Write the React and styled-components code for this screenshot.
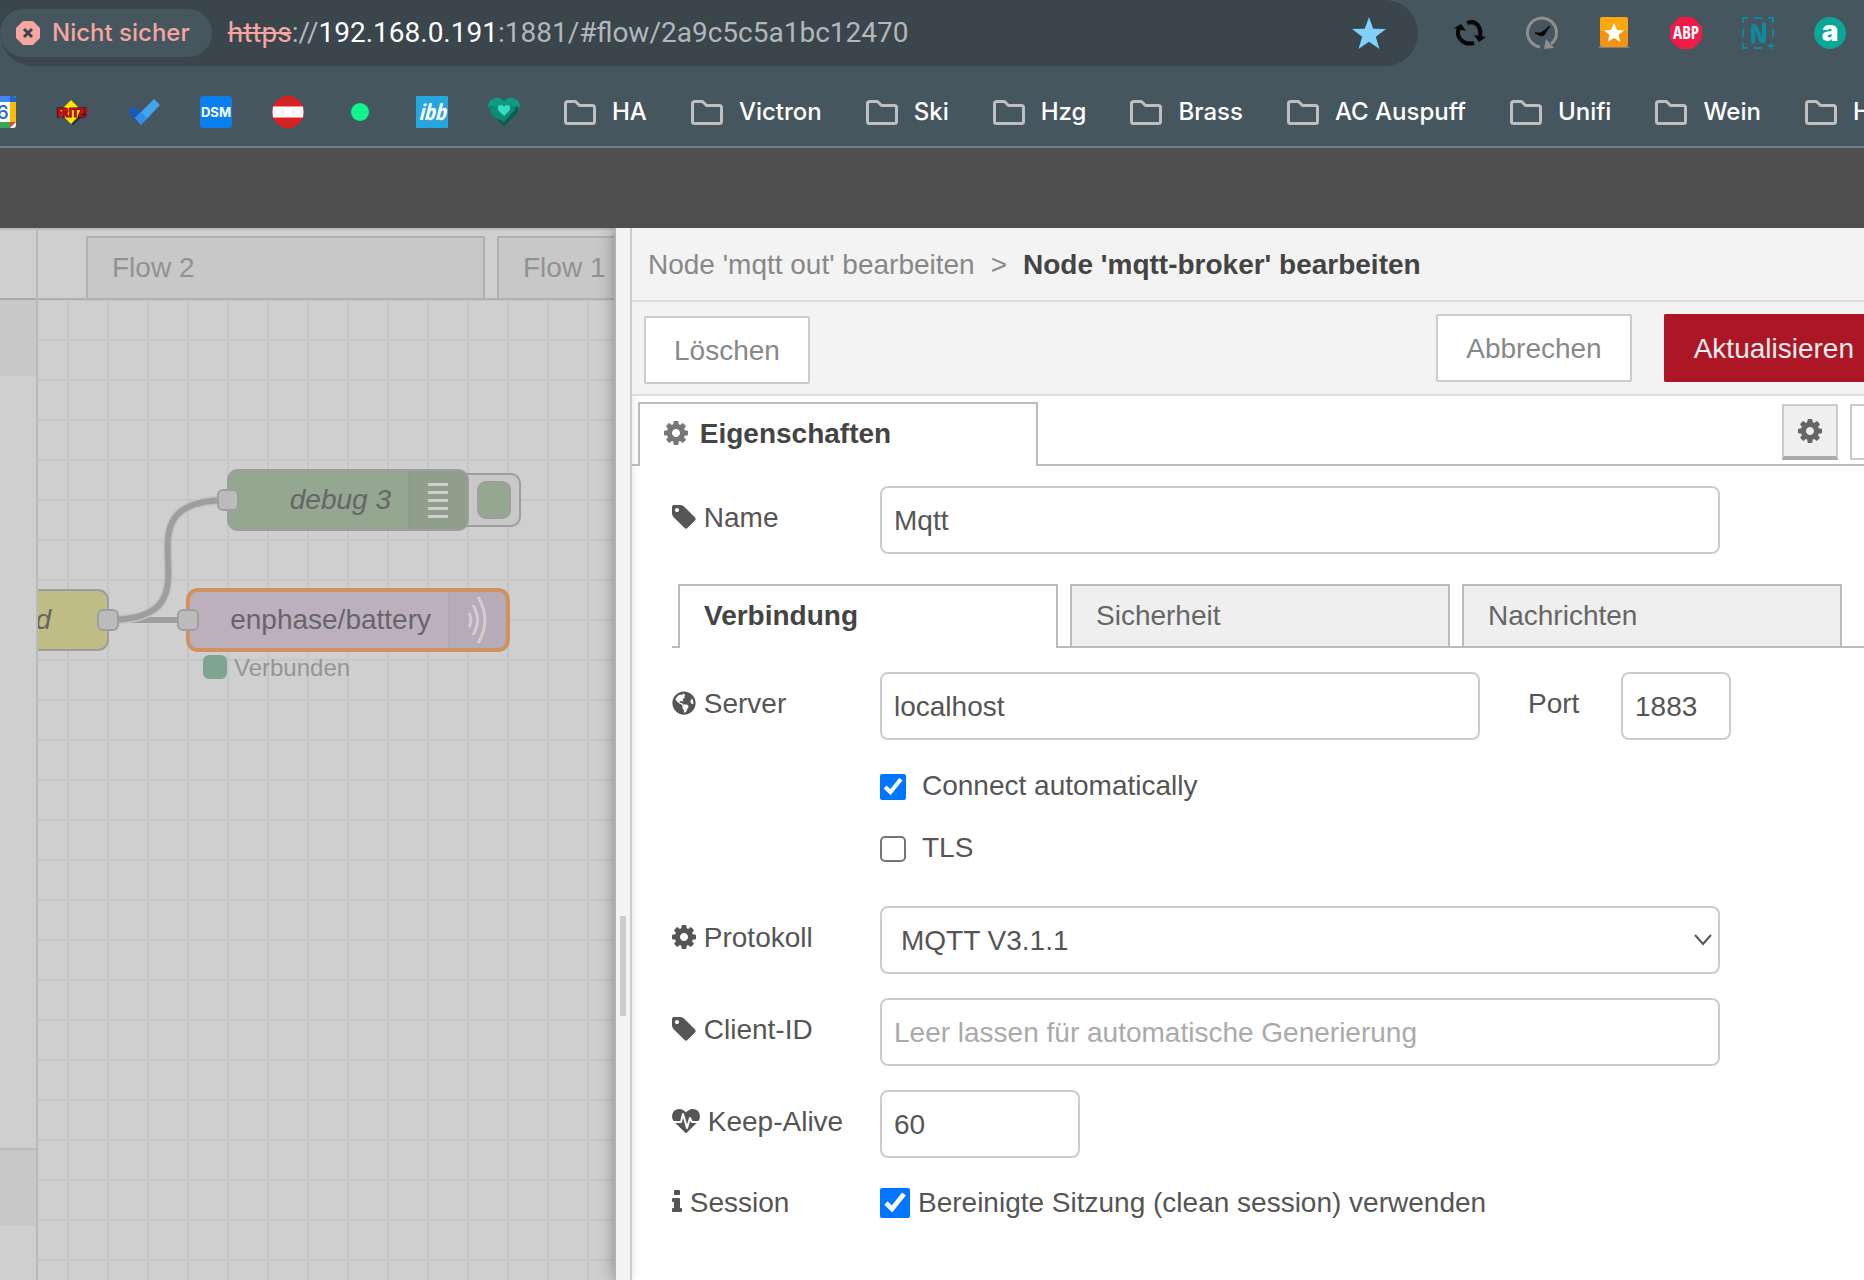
import React, { useState } from "react";
import styled, { createGlobalStyle } from "styled-components";
import { FaGlobeAmericas } from "react-icons/fa";

const folders = ["HA", "Victron", "Ski", "Hzg", "Brass", "AC Auspuff", "Unifi", "Wein", "H"];

const connectionTabs = ["Verbindung", "Sicherheit", "Nachrichten"];

const Cog = () => (
  <Icon viewBox="0 0 1536 1792" $width={24} aria-hidden="true">
    <path d="M1024 896q0-106-75-181t-181-75-181 75-75 181 75 181 181 75 181-75 75-181zm512-109v222q0 12-8 23t-20 13l-185 28q-19 54-39 91 35 50 107 138 10 12 10 25t-9 23q-27 37-99 108t-94 71q-12 0-26-9l-138-108q-44 23-91 38-16 136-29 186-7 28-36 28H657q-14 0-24.5-8.5T621 1634l-28-184q-49-16-90-37l-141 107q-10 9-25 9-14 0-25-11-126-114-165-168-7-10-7-23 0-12 8-23 15-21 51-66.500t54-70.500q-27-50-41-99L29 1041q-13-2-21-12.500T0 1005V783q0-12 8-23t19-13l186-28q14-46 39-92-40-57-107-138-10-12-10-24 0-10 9-23 26-36 98.500-107.500T337 263q13 0 26 10l138 107q44-23 91-38 16-136 29-186 7-28 36-28h222q14 0 24.500 8.500T915 158l28 184q49 16 90 37l142-107q9-9 24-9 13 0 25 10 129 119 165 170 7 8 7 22 0 12-8 23-15 21-51 66.500T1283 625q26 50 41 98l183 28q13 2 21 12.500t8 23.500z" />
  </Icon>
);

const Tag = () => (
  <Icon viewBox="0 0 1536 1792" $width={24} aria-hidden="true">
    <path d="M448 448q0-53-37.500-90.500t-90.500-37.500-90.500 37.500-37.500 90.500 37.500 90.500 90.500 37.500 90.500-37.500 37.500-90.500zm1067 576q0 53-37 90l-491 492q-39 37-91 37-53 0-90-37l-715-716q-38-37-64.500-101t-26.500-117v-416q0-52 38-90t90-38h416q53 0 117 26.500t102 64.500l715 714q37 39 37 91z" />
  </Icon>
);

const Heartbeat = () => (
  <Icon viewBox="0 0 1792 1792" $width={28} aria-hidden="true">
    <path d="M1280 1024h305q-5 6-10 10.500l-9 7.500-3 4-623 600q-18 18-44 18t-44-18l-624-602q-5-2-21-20h369q22 0 39.500-13.500t22.500-34.500l70-281 190 667q6 20 23 33t39 13q21 0 38-13t23-33l146-485 56 112q18 35 57 35zm512-428q0 145-103 300h-369l-111-221q-8-17-25.500-27t-36.500-8q-45 5-56 46l-129 430-196-686q-6-20-23.500-33t-39.500-13-39 13.500-22 34.500l-116 464h-423q-103-155-103-300 0-220 127-344t351-124q62 0 126.500 21.500t120 58 95.500 68.500 76 68q36-36 76-68t95.500-68.500 120-58 126.500-21.500q224 0 351 124t127 344z" />
  </Icon>
);

const Info = () => (
  <Icon viewBox="0 0 640 1792" $width={10} aria-hidden="true">
    <path d="M640 1344v128q0 26-19 45t-45 19h-512q-26 0-45-19t-19-45v-128q0-26 19-45t45-19h64v-384h-64q-26 0-45-19t-19-45v-128q0-26 19-45t45-19h384q26 0 45 19t19 45v576h64q26 0 45 19t19 45zm-128-1152v192q0 26-19 45t-45 19h-256q-26 0-45-19t-19-45v-192q0-26 19-45t45-19h256q26 0 45 19t19 45z" />
  </Icon>
);

function Folder() {
  return (
    <SiteIcon viewBox="0 0 32 32" aria-hidden="true">
      <path
        d="M4 5.500H11.500L15.500 9.500H28.500Q30.500 9.500 30.500 11.500V25.500Q30.500 27.500 28.500 27.500H3.500Q1.500 27.500 1.500 25.500V7.500Q1.500 5.500 4 5.500Z"
        fill="none"
        stroke="#c0bebf"
        strokeWidth="3"
        strokeLinejoin="round"
      />
    </SiteIcon>
  );
}

function Sites() {
  return (
    <>
      <SiteLink href="#kalender" aria-label="Kalender">
        <SiteIcon viewBox="0 0 32 32">
          <rect width="32" height="32" rx="3" fill="#fff" />
          <path d="M3 0H26V6H0V3Q0 0 3 0Z" fill="#4285f4" />
          <path d="M26 0H29Q32 0 32 3V6H26Z" fill="#1967d2" />
          <path d="M26 6H32V26H26Z" fill="#fbbc04" />
          <path d="M0 26H26V32H3Q0 32 0 29Z" fill="#34a853" />
          <path d="M26 26H32L26 32Z" fill="#ea4335" />
          <SvgText x="13" y="23" $size={19} $weight={500} fill="#1a66d6" textAnchor="middle">
            26
          </SvgText>
        </SiteIcon>
      </SiteLink>
      <SiteLink href="#fritz" aria-label="Fritz">
        <SiteIcon viewBox="0 0 32 32">
          <path d="M16 6L29 18L17 29L3 17Z" fill="#111" opacity="0.6" />
          <path d="M15 4L27 16L15 28L3 16Z" fill="#ffe500" />
          <SvgText
            x="16"
            y="21"
            $size={13}
            $weight={700}
            $condensed
            fill="#e2001a"
            stroke="#3a0008"
            strokeWidth="1"
            paintOrder="stroke"
            textAnchor="middle"
          >
            FRITZ!
          </SvgText>
        </SiteIcon>
      </SiteLink>
      <SiteLink href="#todo" aria-label="To Do">
        <SiteIcon viewBox="0 0 32 32">
          <path d="M0 16L6 10L17 21L12 28Z" fill="#185abd" />
          <path d="M7 22L26 3L32 9L13 29Z" fill="#41a5ee" />
          <path d="M7 22L13 16L19 22L13 29Z" fill="#2f8eea" />
        </SiteIcon>
      </SiteLink>
      <SiteLink href="#dsm" aria-label="DSM">
        <SiteIcon viewBox="0 0 32 32">
          <rect width="32" height="32" rx="4" fill="#0a80ee" />
          <SvgText x="16" y="21" $size={13} $weight={700} fill="#fff" textAnchor="middle">
            DSM
          </SvgText>
        </SiteIcon>
      </SiteLink>
      <SiteLink href="#at" aria-label="Österreich">
        <SiteIcon viewBox="0 0 32 32">
          <circle cx="16" cy="16" r="16" fill="#d92121" />
          <path d="M1 10.500H31Q32 16 31 21.500H1Q0 16 1 10.500Z" fill="#fff" />
        </SiteIcon>
      </SiteLink>
      <SiteLink href="#status" aria-label="Status">
        <SiteIcon viewBox="0 0 32 32">
          <circle cx="16" cy="16" r="9" fill="#0ff587" />
        </SiteIcon>
      </SiteLink>
      <SiteLink href="#ibb" aria-label="ibb">
        <SiteIcon viewBox="0 0 32 32">
          <rect width="32" height="32" fill="#26a5de" />
          <SvgText x="16" y="24" $size={22} $weight={700} $condensed fill="#fff" textAnchor="middle" fontStyle="italic">
            ibb
          </SvgText>
        </SiteIcon>
      </SiteLink>
      <SiteLink href="#herz" aria-label="Herz">
        <SiteIcon viewBox="0 0 32 32">
          <path d="M16 31L3 17Q-3 8 4 3Q11-1 16 5Q21-1 28 3Q35 8 29 17Z" fill="#0f9b83" />
          <path d="M16 31L3 17Q0 12 3 10Q16 22 29 10Q32 12 29 17Z" fill="#0b5b4e" />
          <path d="M3 17Q0 11 6 10Q11 9 16 14Q21 9 26 10Q29 12 26 15L16 26L10 23Q5 22 3 17Z" fill="#0a8a77" />
          <path d="M16 20L10 14Q9 9 13 9Q15 9 16 11Q17 9 19 9Q23 9 22 14Z" fill="#35dcc0" />
        </SiteIcon>
      </SiteLink>
    </>
  );
}

function Extensions() {
  return (
    <ExtensionRow>
      <ExtensionButton aria-label="Neu laden">
        <SiteIcon viewBox="0 0 32 32">
          <g fill="none" stroke="#050505" strokeWidth="4">
            <path d="M7 23A11 11 0 0 1 5 11" />
            <path d="M7 23Q12 28 20 26" />
            <path d="M13 6Q21 3 25 10Q27 14 26 19" />
          </g>
          <path d="M0 11L7 7L12 14Z" fill="#050505" />
          <path d="M32 20L25 25L20 18Z" fill="#050505" />
        </SiteIcon>
      </ExtensionButton>
      <ExtensionButton aria-label="Verlauf">
        <SiteIcon viewBox="0 0 32 32">
          <path d="M14 30A14.500 14.500 0 1 1 25 27" fill="none" stroke="#8f8f8f" strokeWidth="3" />
          <path d="M20 22L28 31L18 32Z" fill="#8f8f8f" />
          <path d="M9 16H15L24 9L18 18L15 19Z" fill="#050505" stroke="#050505" strokeWidth="1" />
        </SiteIcon>
      </ExtensionButton>
      <ExtensionButton aria-label="Favoriten">
        <SiteIcon viewBox="0 0 32 32">
          <path d="M0 31L3 28H29L32 31Z" fill="#6f7f96" />
          <rect x="2" width="28" height="30" rx="3" fill="#f7920f" />
          <path d="M4 0H28Q30 0 30 3V14H2V3Q2 0 4 0Z" fill="#fba80f" />
          <path d="M16 6L19 13L26 13.500L20.500 18L22.500 25L16 21L9.500 25L11.500 18L6 13.500L13 13Z" fill="#fff" />
        </SiteIcon>
      </ExtensionButton>
      <ExtensionButton aria-label="Adblock Plus">
        <SiteIcon viewBox="0 0 32 32">
          <path d="M9.500 0H22.500L32 9.500V22.500L22.500 32H9.500L0 22.500V9.500Z" fill="#ee1c46" />
          <SvgText x="16" y="22" $size={17} $weight={700} $condensed fill="#fff" textAnchor="middle">
            ABP
          </SvgText>
        </SiteIcon>
      </ExtensionButton>
      <ExtensionButton aria-label="Notiz">
        <SiteIcon viewBox="0 0 32 32">
          <g fill="none" stroke="#0d8aa0" strokeWidth="2">
            <path d="M1 6V1H6M12 1H20M26 1H31V6M31 12V20M1 12V20M1 26V31H6M12 31H20M29 26V32M26 29H32" />
            <path d="M11 25V12Q11 6 14 11L19 23Q22 27 22 20V7" strokeWidth="4" strokeLinecap="round" />
          </g>
        </SiteIcon>
      </ExtensionButton>
      <ExtensionButton aria-label="Konto">
        <SiteIcon viewBox="0 0 32 32">
          <circle cx="16" cy="16" r="16" fill="#0aa698" />
          <SvgText x="16" y="24" $size={28} $weight={900} fill="#fff" textAnchor="middle">
            a
          </SvgText>
        </SiteIcon>
      </ExtensionButton>
    </ExtensionRow>
  );
}

function Flow() {
  return (
    <FlowCanvas>
      <FlowDrawing>
        <path d="M70 320H150" fill="none" stroke="#9e9e9e" strokeWidth="6" />
        <path d="M70 320C195 320 65 200 190 200" fill="none" stroke="#c4c4c4" strokeWidth="9" />
        <path d="M70 320C195 320 65 200 190 200" fill="none" stroke="#9e9e9e" strokeWidth="6" />

        <g stroke="#9e9e9e" strokeWidth="2">
          <rect x="410" y="174" width="72" height="52" rx="9" fill="#c8c8c8" />
          <rect x="440" y="182" width="32" height="36" rx="8" fill="#95a691" />
          <rect x="190" y="170" width="240" height="60" rx="10" fill="#95a691" />
          <rect x="-40" y="290" width="110" height="60" rx="10" fill="#bfbc86" />
        </g>
        <path d="M371 171H420Q429 171 429 180V220Q429 229 420 229H371Z" fill="#8f9e8b" />
        <path d="M371 171V229" stroke="#869583" strokeWidth="1" />
        <path d="M390 184.500H410M390 192.500H410M390 200.500H410M390 208.500H410M390 216.500H410" stroke="#cfcfcf" strokeWidth="3" />
        <NodeLabel x="353" y="209" textAnchor="end" $italic>
          debug 3
        </NodeLabel>
        <NodeLabel x="13" y="329" textAnchor="end" $italic>
          d
        </NodeLabel>

        <rect x="150" y="290" width="320" height="60" rx="10" fill="#bcb0bd" />
        <path d="M411 290H460Q470 290 470 300V340Q470 350 460 350H411Z" fill="#b6abb8" />
        <path d="M411 290V350" stroke="#aba0ad" strokeWidth="1" />
        <rect x="150" y="290" width="320" height="60" rx="10" fill="none" stroke="#d09060" strokeWidth="4" />
        <g fill="none" stroke="#cfcfcf" strokeWidth="3">
          <path d="M431 313Q435 320 431 327" />
          <path d="M435 305Q444 320 435 335" />
          <path d="M440 297Q454 320 440 343" />
        </g>
        <NodeLabel x="393" y="329" textAnchor="end">
          enphase/battery
        </NodeLabel>

        <g fill="#bbb" stroke="#9e9e9e" strokeWidth="2">
          <rect x="180" y="190" width="20" height="20" rx="5" />
          <rect x="60" y="310" width="20" height="20" rx="5" />
          <rect x="140" y="310" width="20" height="20" rx="5" />
        </g>
        <rect x="165" y="355" width="24" height="24" rx="6" fill="#7ea592" />
        <StatusLabel x="196" y="376">
          Verbunden
        </StatusLabel>
      </FlowDrawing>
    </FlowCanvas>
  );
}

function BrokerForm() {
  const [tab, setTab] = useState("Verbindung");
  const [name, setName] = useState("Mqtt");
  const [server, setServer] = useState("localhost");
  const [port, setPort] = useState("1883");
  const [keepAlive, setKeepAlive] = useState("60");
  const [auto, setAuto] = useState(true);
  const [tls, setTls] = useState(false);
  const [clean, setClean] = useState(true);

  return (
    <Form onSubmit={(e) => e.preventDefault()}>
      <Row>
        <Label htmlFor="name">
          <Tag /> Name
        </Label>
        <Input id="name" value={name} onChange={(e) => setName(e.target.value)} />
      </Row>

      <SubTabs role="tablist">
        {connectionTabs.map((item) => (
          <SubTab key={item} type="button" role="tab" aria-selected={tab === item} $active={tab === item} onClick={() => setTab(item)}>
            {item}
          </SubTab>
        ))}
      </SubTabs>

      <Rows>
        <Row $wide>
          <Label htmlFor="server">
            <Globe aria-hidden="true" /> Server
          </Label>
          <Input id="server" value={server} onChange={(e) => setServer(e.target.value)} />
          <PortLabel htmlFor="port">Port</PortLabel>
          <Input id="port" $width={110} value={port} onChange={(e) => setPort(e.target.value)} />
        </Row>

        <CheckGroup>
          <CheckRow>
            <Checkbox id="auto" checked={auto} onChange={() => setAuto(!auto)} />
            <CheckLabel htmlFor="auto">Connect automatically</CheckLabel>
          </CheckRow>
          <CheckRow>
            <Checkbox id="tls" checked={tls} onChange={() => setTls(!tls)} />
            <CheckLabel htmlFor="tls">TLS</CheckLabel>
          </CheckRow>
        </CheckGroup>

        <Row>
          <Label htmlFor="protocol">
            <Cog /> Protokoll
          </Label>
          <SelectBox>
            <Select id="protocol" defaultValue="4">
              <option value="3">MQTT V3.1 (alt)</option>
              <option value="4">MQTT V3.1.1</option>
              <option value="5">MQTT V5</option>
            </Select>
            <Chevron viewBox="0 0 18 12" aria-hidden="true">
              <path d="M1 1L9 10L17 1" fill="none" stroke="#555" strokeWidth="2" />
            </Chevron>
          </SelectBox>
        </Row>

        <Row>
          <Label htmlFor="client">
            <Tag /> Client-ID
          </Label>
          <Input id="client" placeholder="Leer lassen für automatische Generierung" />
        </Row>

        <Row>
          <Label htmlFor="keepalive">
            <Heartbeat /> Keep-Alive
          </Label>
          <Input id="keepalive" $width={200} value={keepAlive} onChange={(e) => setKeepAlive(e.target.value)} />
        </Row>

        <SessionRow>
          <SessionLabel>
            <Info /> Session
          </SessionLabel>
          <Checkbox id="clean" $large checked={clean} onChange={() => setClean(!clean)} />
          <label htmlFor="clean">Bereinigte Sitzung (clean session) verwenden</label>
        </SessionRow>
      </Rows>
    </Form>
  );
}

function App() {
  return (
    <Page>
      <GlobalStyle />
      <Browser>
        <AddressRow>
          <AddressBar>
            <Chip>
              <ChipIcon viewBox="0 0 24 24" aria-hidden="true">
                <path d="M7 0H17L24 7V17L17 24H7L0 17V7Z" fill="#f5a6a1" />
                <path d="M8 8L16 16M16 8L8 16" stroke="#3a454c" strokeWidth="3" />
              </ChipIcon>
              Nicht sicher
            </Chip>
            <Url>
              <s>https</s>://<b>192.168.0.191</b>:1881/#flow/2a9c5c5a1bc12470
            </Url>
            <StarButton aria-label="Lesezeichen">
              <svg viewBox="0 0 34 32" width="34" height="32">
                <path d="M17 0L21.200 11.800L34 12L23.800 19.700L27.500 32L17 24.800L6.500 32L10.200 19.700L0 12L12.800 11.800Z" fill="#7fd1fb" />
              </svg>
            </StarButton>
          </AddressBar>
          <Extensions />
        </AddressRow>
        <Bookmarks>
          <Sites />
          {folders.map((folder) => (
            <FolderLink key={folder} href={`#${folder}`}>
              <Folder />
              {folder}
            </FolderLink>
          ))}
        </Bookmarks>
      </Browser>

      <AppHeader />

      <Editor>
        <Palette>
          <PaletteTop />
          <PaletteSearch />
          <PaletteList />
          <PaletteFooter />
          <PaletteEnd />
        </Palette>

        <Workspace>
          <FlowTabs>
            <FlowTab $grow>Flow 2</FlowTab>
            <FlowTab>Flow 1</FlowTab>
          </FlowTabs>
          <Flow />
        </Workspace>

        <Tray>
          <ResizeBar>
            <ResizeHandle />
          </ResizeBar>
          <TrayBody>
            <Title>
              <span>Node 'mqtt out' bearbeiten</span>
              <span>&gt;</span>
              <strong>Node 'mqtt-broker' bearbeiten</strong>
            </Title>
            <Toolbar>
              <DeleteButton>Löschen</DeleteButton>
              <Actions>
                <Button>Abbrechen</Button>
                <PrimaryButton>Aktualisieren</PrimaryButton>
              </Actions>
            </Toolbar>
            <TabBar>
              <PropertiesTab>
                <Cog /> Eigenschaften
              </PropertiesTab>
              <TabButtons>
                <GearButton aria-label="Einstellungen">
                  <Cog />
                </GearButton>
                <CutButton aria-label="Beschreibung" />
              </TabButtons>
            </TabBar>
            <BrokerForm />
          </TrayBody>
        </Tray>
      </Editor>
    </Page>
  );
}

const GlobalStyle = createGlobalStyle`
  * {
    box-sizing: border-box;
  }
  body {
    margin: 0;
    overflow: hidden;
    font: 28px/40px "Liberation Sans", Arial, sans-serif;
    color: #555;
  }
  button, input, select {
    font: inherit;
    color: inherit;
  }
  button {
    cursor: pointer;
    padding: 0;
  }
`;

const Page = styled.div`
  display: flex;
  flex-direction: column;
  height: 100vh;
`;

/* browser chrome */

const Browser = styled.header`
  background: #46565f;
  border-bottom: 2px solid #6f7f89;
  font-family: Inter, sans-serif;
  overflow: hidden;
`;

const AddressRow = styled.div`
  align-items: center;
  display: flex;
  height: 66px;
`;

const AddressBar = styled.div`
  align-items: center;
  background: #3a454c;
  border-radius: 0 34px 34px 34px;
  display: flex;
  flex: 1;
  height: 100%;
`;

const Chip = styled.div`
  align-items: center;
  background: #46565f;
  border-radius: 24px;
  color: #f5a6a1;
  display: flex;
  font-size: 24px;
  font-weight: 500;
  gap: 12px;
  height: 48px;
  padding: 0 22px 0 16px;
  white-space: nowrap;
`;

const ChipIcon = styled.svg`
  height: 24px;
  width: 24px;
`;

const Url = styled.div`
  color: #b3b7b9;
  flex: 1;
  font-family: Roboto, sans-serif;
  font-size: 28px;
  padding-left: 16px;
  white-space: nowrap;
  s {
    color: #f5a6a1;
  }
  b {
    color: #fff;
    font-weight: 400;
  }
`;

const StarButton = styled.button`
  background: none;
  border: none;
  display: flex;
  margin-right: 32px;
`;

const ExtensionRow = styled.div`
  display: flex;
  gap: 40px;
  padding: 0 18px 0 36px;
`;

const ExtensionButton = styled.button`
  background: none;
  border: none;
  display: flex;
`;

const SiteIcon = styled.svg`
  display: block;
  flex: none;
  height: 32px;
  overflow: visible;
  width: 32px;
`;

const SvgText = styled.text`
  font-family: ${({ $condensed }) => ($condensed ? '"Open Sans Condensed", "Liberation Sans Narrow"' : "Inter")}, sans-serif;
  font-size: ${({ $size }) => $size}px;
  font-weight: ${({ $weight }) => $weight};
`;

const Bookmarks = styled.nav`
  align-items: center;
  display: flex;
  gap: 40px;
  height: 80px;
  margin-left: -16px;
  padding-top: 12px;
`;

const SiteLink = styled.a`
  display: block;
`;

const FolderLink = styled.a`
  align-items: center;
  color: #fff;
  display: flex;
  font-size: 24px;
  font-weight: 500;
  gap: 16px;
  padding-left: 4px;
  text-decoration: none;
  white-space: nowrap;
`;

/* editor */

const AppHeader = styled.div`
  background: #4f4f4f;
  height: 80px;
`;

const Editor = styled.main`
  display: flex;
  flex: 1;
  min-height: 0;
`;

const Palette = styled.aside`
  background: #cfcfcf;
  border-right: 2px solid #bababa;
  display: flex;
  flex-direction: column;
  width: 38px;
`;

const PaletteTop = styled.div`
  border-bottom: 2px solid #a9a9a9;
  border-top: 2px solid #bababa;
  height: 72px;
`;

const PaletteSearch = styled.div`
  background: #c8c8c8;
  height: 76px;
`;

const PaletteList = styled.div`
  flex: 1;
`;

const PaletteFooter = styled.div`
  background: #c8c8c8;
  border-top: 2px solid #bababa;
  height: 78px;
`;

const PaletteEnd = styled.div`
  height: 54px;
`;

const Workspace = styled.section`
  background: #cfcfcf;
  display: flex;
  flex-direction: column;
  width: 576px;
`;

const FlowTabs = styled.div`
  border-bottom: 2px solid #b1b1b1;
  border-top: 2px solid #bababa;
  display: flex;
  gap: 12px;
  height: 72px;
  padding: 6px 0 0 48px;
`;

const FlowTab = styled.div`
  align-items: center;
  background: #c8c8c8;
  border: 2px solid #b1b1b1;
  border-bottom: none;
  border-right-width: ${({ $grow }) => ($grow ? 2 : 0)}px;
  color: #929292;
  display: flex;
  flex: ${({ $grow }) => ($grow ? "1" : "0 0 117px")};
  padding-left: 24px;
  white-space: nowrap;
`;

const FlowCanvas = styled.div`
  background-image: linear-gradient(#c6c6c6 2px, transparent 2px), linear-gradient(90deg, #c6c6c6 2px, transparent 2px);
  background-position: 29px -1px;
  background-size: 40px 40px;
  flex: 1;
`;

const FlowDrawing = styled.svg`
  display: block;
  height: 100%;
  width: 100%;
`;

const NodeLabel = styled.text`
  fill: #666;
  font-size: 28px;
  font-style: ${({ $italic }) => ($italic ? "italic" : "normal")};
`;

const StatusLabel = styled.text`
  fill: #959595;
  font-size: 24px;
`;

/* edit tray */

const Tray = styled.section`
  background: #fff;
  border-left: 2px solid #bbb;
  box-shadow: 0 0 16px rgba(0, 0, 0, 0.3);
  clip-path: inset(0 0 0 -20px);
  display: flex;
  flex: 1;
  min-width: 0;
`;

const ResizeBar = styled.div`
  background: #f3f3f3;
  border-right: 2px solid #ccc;
  box-shadow: 0 0 8px rgba(0, 0, 0, 0.12);
  padding: 688px 4px 0;
  width: 16px;
`;

const ResizeHandle = styled.div`
  background: #ccc;
  height: 100px;
  width: 6px;
`;

const TrayBody = styled.div`
  flex: 1;
  min-width: 0;
`;

const Title = styled.div`
  align-items: center;
  background: #f3f3f3;
  border-bottom: 2px solid #ddd;
  color: #888;
  display: flex;
  gap: 16px;
  height: 74px;
  padding: 2px 16px 0;
  white-space: nowrap;
  strong {
    color: #444;
  }
`;

const Toolbar = styled.div`
  background: #f3f3f3;
  border-bottom: 2px solid #ddd;
  display: flex;
  height: 94px;
  justify-content: space-between;
  padding: 12px 0 0 12px;
`;

const Actions = styled.div`
  display: flex;
  gap: 32px;
`;

const Button = styled.button`
  background: #fff;
  border: 2px solid #ccc;
  border-radius: 2px;
  color: #888;
  height: 68px;
  padding: 2px 28px 0;
`;

const DeleteButton = styled(Button)`
  margin-top: 2px;
`;

const PrimaryButton = styled(Button)`
  background: #ad1625;
  border-color: #ad1625;
  border-radius: 2px 0 0 2px;
  border-right: none;
  color: #eee;
  padding: 2px 10px 0 28px;
`;

const TabBar = styled.div`
  border-bottom: 2px solid #bbb;
  display: flex;
  height: 70px;
  justify-content: space-between;
  padding: 6px 0 0 6px;
`;

const PropertiesTab = styled.div`
  background: #fff;
  border: 2px solid #bbb;
  border-bottom: none;
  color: #444;
  font-weight: bold;
  height: 64px;
  padding: 10px 24px;
  width: 400px;
  svg {
    color: #777;
    margin-right: 4px;
  }
`;

const TabButtons = styled.div`
  display: flex;
  gap: 12px;
  padding-top: 2px;
`;

const GearButton = styled.button`
  background: #efefef;
  border: 2px solid #ccc;
  border-bottom: 4px solid #aaa;
  color: #666;
  height: 56px;
  line-height: 0;
  width: 56px;
`;

const CutButton = styled.button`
  background: #fff;
  border: 2px solid #ccc;
  border-right: none;
  height: 56px;
  width: 14px;
`;

const Form = styled.form`
  padding: 20px 0 0 40px;
`;

const Rows = styled.div`
  display: flex;
  flex-direction: column;
  gap: 24px;
  padding-top: 24px;
`;

const Row = styled.div`
  align-items: center;
  display: flex;
  padding-right: ${({ $wide }) => ($wide ? 133 : 144)}px;
`;

const Label = styled.label`
  flex: 0 0 208px;
  padding-bottom: 4px;
  white-space: nowrap;
`;

const Icon = styled.svg`
  fill: currentColor;
  height: 28px;
  vertical-align: -4px;
  width: ${({ $width }) => $width}px;
`;

const Globe = styled(FaGlobeAmericas)`
  height: 24px;
  vertical-align: -2px;
  width: 24px;
`;

const PortLabel = styled.label`
  flex: 0 0 93px;
  margin-left: 48px;
  padding-bottom: 4px;
`;

const Input = styled.input`
  background: #fff;
  border: 2px solid #ccc;
  border-radius: 8px;
  flex: ${({ $width }) => ($width ? `0 0 ${$width}px` : "1")};
  height: 68px;
  min-width: 0;
  padding: 2px 12px 0;
  width: ${({ $width }) => ($width ? `${$width}px` : "auto")};
  &::placeholder {
    color: #aaa;
  }
`;

const SelectBox = styled.div`
  flex: 1;
  position: relative;
`;

const Select = styled.select`
  appearance: none;
  background: #fff;
  border: 2px solid #ccc;
  border-radius: 8px;
  display: block;
  height: 68px;
  padding: 2px 20px 0 19px;
  width: 100%;
`;

const Chevron = styled.svg`
  height: 12px;
  pointer-events: none;
  position: absolute;
  right: 8px;
  top: 28px;
  width: 18px;
`;

const SubTabs = styled.div`
  border-bottom: 2px solid #bbb;
  display: flex;
  gap: 12px;
  height: 64px;
  margin-top: 30px;
  padding: 0 22px 0 6px;
`;

const SubTab = styled.button`
  background: ${({ $active }) => ($active ? "#fff" : "#efefef")};
  border: 2px solid #bbb;
  border-bottom: none;
  color: ${({ $active }) => ($active ? "#444" : "#666")};
  flex: 1;
  font-weight: ${({ $active }) => ($active ? "bold" : "normal")};
  height: ${({ $active }) => ($active ? 64 : 62)}px;
  padding: ${({ $active }) => ($active ? "0 24px 2px" : "0 24px")};
  text-align: left;
`;

const CheckGroup = styled.div`
  margin: -8px 0 2px;
  padding-left: 208px;
`;

const CheckRow = styled.div`
  align-items: center;
  display: flex;
  gap: 16px;
  height: 62px;
`;

const CheckLabel = styled.label`
  padding-bottom: 2px;
`;

const Checkbox = styled.input.attrs({ type: "checkbox" })`
  flex: none;
  height: ${({ $large }) => ($large ? 30 : 26)}px;
  margin: 0;
  width: ${({ $large }) => ($large ? 30 : 26)}px;
  &:not(:checked) {
    appearance: none;
    background: #fff;
    border: 2px solid #767676;
    border-radius: 5px;
  }
`;

const SessionRow = styled.div`
  align-items: center;
  display: flex;
  height: 42px;
  label {
    padding-left: 8px;
  }
`;

const SessionLabel = styled.div`
  flex: 0 0 208px;
`;

export default App;
